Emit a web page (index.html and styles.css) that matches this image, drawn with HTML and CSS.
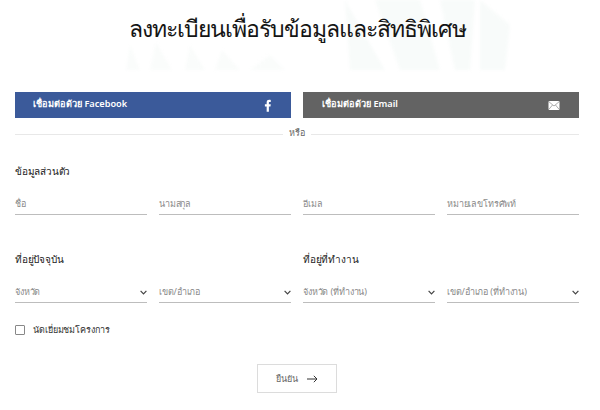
FILE: index.html
```html
<!DOCTYPE html>
<html lang="th">
<head>
<meta charset="utf-8">
<title>ลงทะเบียน</title>
<link rel="stylesheet" href="styles.css">
</head>
<body>
<main class="page">
  <svg class="leaf" width="600" height="72" viewBox="0 0 600 72" aria-hidden="true">
    <path d="M126 70 L130 45 L140 70Z M150 70 L156 42 L172 70Z M185 70 L190 45 L205 70Z M215 70 L222 50 L240 70Z M250 70 L270 55 L285 70Z" fill="#fafcfb"/>
    <path d="M345 0 L385 70 L350 70Z M375 0 L420 0 L440 70 L400 70Z M440 0 L475 0 L470 70 L455 70Z M480 0 L510 25 L505 70 L480 70Z" fill="#f8fbfa"/>
  </svg>
  <h1 class="title">ลงทะเบียนเพื่อรับข้อมูลและสิทธิพิเศษ</h1>

  <div class="connect">
    <a class="connect-btn fb">
      <span>เชื่อมต่อด้วย Facebook</span>
      <svg width="8" height="13" viewBox="0 0 9 14"><path d="M3 14V8H1V5.500H3V3.500C3 1.300 4.200 .5 5.800 .5C6.700 .5 7.300 .6 7.600 .7V3H6.300C5.600 3 5.500 3.300 5.500 3.900V5.500H7.600L7.300 8H5.500V14Z" fill="#fff"/></svg>
    </a>
    <a class="connect-btn mail">
      <span>เชื่อมต่อด้วย Email</span>
      <svg width="12" height="9" viewBox="0 0 11 9"><rect width="11" height="9" rx="1" fill="#fff"/><path d="M.5 .8L5.500 5L10.500 .8M.5 8.200L4 4M10.500 8.200L7 4" fill="none" stroke="#8a8a8a" stroke-width=".7"/></svg>
    </a>
  </div>

  <div class="or"><span>หรือ</span></div>

  <h2 class="heading first">ข้อมูลส่วนตัว</h2>
  <div class="row four">
    <div class="field">ชื่อ</div>
    <div class="field">นามสกุล</div>
    <div class="field">อีเมล</div>
    <div class="field">หมายเลขโทรศัพท์</div>
  </div>

  <div class="row two">
    <h2 class="heading">ที่อยู่ปัจจุบัน</h2>
    <h2 class="heading">ที่อยู่ที่ทำงาน</h2>
  </div>
  <div class="row four">
    <div class="field select">จังหวัด<svg class="chev" width="7" height="5" viewBox="0 0 7 5"><path d="M.6 .8L3.500 3.800L6.400 .8" fill="none" stroke="#444" stroke-width="1.200"/></svg></div>
    <div class="field select">เขต/อำเภอ<svg class="chev" width="7" height="5" viewBox="0 0 7 5"><path d="M.6 .8L3.500 3.800L6.400 .8" fill="none" stroke="#444" stroke-width="1.200"/></svg></div>
    <div class="field select">จังหวัด (ที่ทำงาน)<svg class="chev" width="7" height="5" viewBox="0 0 7 5"><path d="M.6 .8L3.500 3.800L6.400 .8" fill="none" stroke="#444" stroke-width="1.200"/></svg></div>
    <div class="field select">เขต/อำเภอ (ที่ทำงาน)<svg class="chev" width="7" height="5" viewBox="0 0 7 5"><path d="M.6 .8L3.500 3.800L6.400 .8" fill="none" stroke="#444" stroke-width="1.200"/></svg></div>
  </div>

  <label class="visit"><span class="box"></span>นัดเยี่ยมชมโครงการ</label>

  <div class="actions">
    <a class="confirm">ยืนยัน
      <svg width="11" height="8" viewBox="0 0 11 8"><path d="M0 4H10M6.800 .8L10 4L6.800 7.200" fill="none" stroke="#333" stroke-width="1"/></svg>
    </a>
  </div>
</main>
</body>
</html>
```
FILE: styles.css
```css
* { box-sizing: border-box; }
html, body { margin: 0; background: #fff; }
body {
  width: 600px;
  height: 410px;
  overflow: hidden;
  font-family: "Noto Sans", Roboto, "Liberation Sans", sans-serif;
  color: #222;
}
.page { position: relative; padding: 0 21px 0 15px; }
.leaf { position: absolute; left: 0; top: 0; filter: blur(1.500px); }
.title {
  position: relative;
  margin: 0;
  height: 92px;
  padding-top: 12px;
  text-align: center;
  font-size: 23px;
  line-height: 32px;
  font-weight: 500;
  letter-spacing: -1px;
  color: #151515;
}
.connect { display: grid; grid-template-columns: 1fr 1fr; gap: 12px; }
.connect-btn {
  height: 26px;
  display: flex;
  align-items: center;
  justify-content: space-between;
  padding: 0 19px 0 18px;
  color: #fff;
  font-size: 9.200px;
  font-weight: 600;
}
.connect-btn span { padding-bottom: 3px; }
.fb { background: #3b5a9a; }
.mail { background: #636363; padding-left: 19px; }
.or {
  position: relative;
  margin-top: 9px;
  height: 14px;
  display: flex;
  justify-content: center;
  background: linear-gradient(#e8e8e8, #e8e8e8) 0 7px / 100% 1px no-repeat;
}
.or span {
  background: #fff;
  padding: 0 6px;
  font-size: 9px;
  line-height: 12px;
  color: #666;
}
.heading {
  margin: 0;
  font-size: 10px;
  line-height: 16px;
  font-weight: 500;
  letter-spacing: -0.2px;
  color: #222;
}
.heading.first { margin-top: 22px; }
.row { display: grid; gap: 12px; }
.four { grid-template-columns: repeat(4, 1fr); margin-top: 14px; }
.two { grid-template-columns: 1fr 1fr; margin-top: 36px; }
.two + .four { margin-top: 14px; }
.field {
  height: 22px;
  padding-top: 1px;
  display: flex;
  align-items: center;
  justify-content: space-between;
  border-bottom: 1px solid #bdbdbd;
  font-size: 9px;
  letter-spacing: -0.15px;
  color: #8a8a8a;
}
.chev { flex: none; margin-right: 0; }
.visit {
  margin-top: 20px;
  display: flex;
  align-items: center;
  gap: 8px;
  font-size: 9px;
  letter-spacing: -0.1px;
  font-weight: 500;
  color: #333;
}
.box {
  width: 10px;
  height: 10px;
  border: 1px solid #888;
  border-radius: 1px;
}
.actions { display: flex; justify-content: center; margin-top: 27px; }
.confirm {
  width: 80px;
  height: 29px;
  display: flex;
  align-items: center;
  justify-content: center;
  gap: 9px;
  border: 1px solid #dcdcdc;
  font-size: 9px;
  color: #666;
}
```
